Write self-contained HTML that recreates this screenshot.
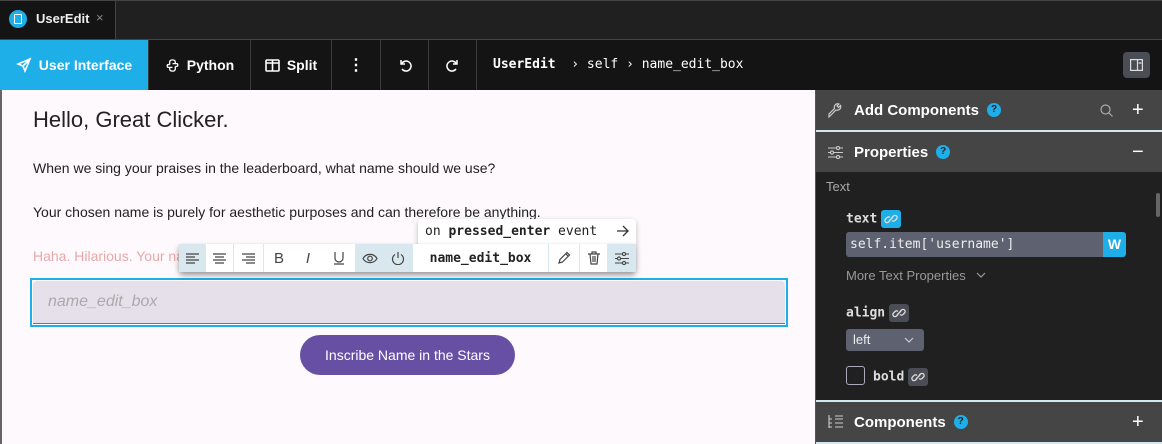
<!DOCTYPE html>
<html><head><style>
*{box-sizing:border-box;margin:0;padding:0}
body{width:1162px;height:444px;overflow:hidden;background:#1f1f1f;font-family:"Liberation Sans",sans-serif;position:relative}
.abs{position:absolute}
.mono{font-family:"DejaVu Sans Mono","Liberation Mono",monospace}
.tb{position:absolute;top:40px;height:50px;border-right:1px solid #3a3a3a;display:flex;align-items:center;justify-content:center;color:#fff;font-weight:bold;font-size:14px;gap:7px}
.hdr{position:absolute;left:816px;width:346px;background:#454545;color:#fff;font-weight:bold;font-size:15px;display:flex;align-items:center}
.q{display:inline-block;width:14px;height:14px;border-radius:50%;background:#1eaee8;color:#222;font-size:10px;text-align:center;line-height:14px;margin-left:8px}
.tg{position:absolute;top:244px;height:28px;display:flex;align-items:center;justify-content:center;border-right:1px solid #d8e8ee}
.lk{display:inline-flex;align-items:center;justify-content:center;width:20px;height:18px;border-radius:3px;background:#4a4d55;vertical-align:middle;margin-left:4px}
</style></head><body>
<svg width="0" height="0" style="position:absolute"><defs>
<symbol id="link" viewBox="0 0 14 14"><g fill="none" stroke="#ddd" stroke-width="1.3"><path d="M6 8.5L4.5 10a2 2 0 0 1-3-3L3 5.5a2 2 0 0 1 3 0"/><path d="M8 5.5L9.5 4a2 2 0 0 1 3 3L11 8.5a2 2 0 0 1-3 0"/><path d="M5 9l4-4"/></g></symbol>
</defs></svg>
<!-- tab bar -->
<div class="abs" style="left:0;top:0;width:1162px;height:40px;background:#202020;border-top:1px solid #444;border-bottom:1px solid #444"></div>
<div class="abs" style="left:0;top:1px;width:116px;height:38px;background:#141414;border-right:1px solid #444"></div>
<div class="abs" style="left:9px;top:10px;width:18px;height:18px;border-radius:50%;background:#1eaee8"></div>
<div class="abs" style="left:14px;top:14px;width:8px;height:10px;border:1.5px solid #fff;border-radius:1px"></div>
<div class="abs" style="left:36px;top:11px;color:#eee;font-weight:bold;font-size:13px">UserEdit</div>
<div class="abs" style="left:96px;top:10px;color:#888;font-size:13px">×</div>
<!-- toolbar -->
<div class="abs" style="left:0;top:40px;width:1162px;height:50px;background:#141414"></div>
<div class="tb" style="left:0;width:149px;background:#1eaee8">
<svg width="16" height="16" viewBox="0 0 16 16" fill="none" stroke="#fff" stroke-width="1.6"><path d="M14 2L2 7l5 2 2 5z M7 9l7-7"/></svg>User Interface</div>
<div class="tb" style="left:149px;width:102px"><svg width="15" height="15" viewBox="0 0 16 16" fill="none" stroke="#fff" stroke-width="1.4"><path d="M5 7V4.5C5 3 6 2 8 2s3 1 3 2.5V6M11 9v2.5C11 13 10 14 8 14s-3-1-3-2.5V10"/><path d="M5 7H3.5C2 7 2 10 3.5 10H8M11 9h1.5C14 9 14 6 12.5 6H8"/></svg>Python</div>
<div class="tb" style="left:251px;width:81px"><svg width="15" height="13" viewBox="0 0 15 13" fill="none" stroke="#fff" stroke-width="1.6"><rect x="1" y="1" width="13" height="11" rx="1"/><path d="M7.5 1v11M1 4h13"/></svg>Split</div>
<div class="tb" style="left:332px;width:49px;font-size:16px">⋮</div>
<div class="tb" style="left:381px;width:48px"><svg width="14" height="14" viewBox="0 0 14 14" fill="none" stroke="#fff" stroke-width="1.5"><path d="M3 2v4h4M3.5 6A5 5 0 1 1 4 11"/></svg></div>
<div class="tb" style="left:429px;width:48px"><svg width="14" height="14" viewBox="0 0 14 14" fill="none" stroke="#fff" stroke-width="1.5"><path d="M11 2v4H7M10.5 6A5 5 0 1 0 10 11"/></svg></div>
<div class="abs mono" style="left:493px;top:57px;color:#fff;font-size:13px;white-space:pre"><b>UserEdit</b>  › self › name_edit_box</div>
<div class="abs" style="left:1123px;top:52px;width:27px;height:26px;border-radius:4px;background:#4a4d55"></div>
<svg class="abs" style="left:1130px;top:59px" width="13" height="12" viewBox="0 0 13 12" fill="none" stroke="#ddd" stroke-width="1.2"><rect x="0.6" y="0.6" width="11.8" height="10.8"/><path d="M7.5 0.6v10.8M8.5 4h3"/></svg>
<!-- canvas -->
<div class="abs" style="left:0;top:90px;width:816px;height:354px;background:#fdf9fd;border-left:2px solid #666"></div>
<div class="abs" style="left:33px;top:107px;font-size:22px;color:#222">Hello, Great Clicker.</div>
<div class="abs" style="left:33px;top:160px;font-size:14px;color:#222">When we sing your praises in the leaderboard, what name should we use?</div>
<div class="abs" style="left:33px;top:204px;font-size:14px;color:#222">Your chosen name is purely for aesthetic purposes and can therefore be anything.</div>
<div class="abs" style="left:33px;top:248px;font-size:14px;color:#e8a8a8">Haha. Hilarious. Your name</div>
<div class="abs" style="left:30px;top:278px;width:758px;height:49px;border:2px solid #1eaee8"></div>
<div class="abs" style="left:33px;top:281px;width:752px;height:43px;background:#e6e0ea;border-radius:4px 4px 0 0;border-bottom:1.5px solid #777"></div>
<div class="abs" style="left:48px;top:293px;font-size:16px;color:#aaa;font-style:italic">name_edit_box</div>
<div class="abs" style="left:300px;top:335px;width:215px;height:40px;border-radius:20px;background:#6750a4;color:#fff;font-size:14px;text-align:center;line-height:40px">Inscribe Name in the Stars</div>
<!-- floating toolbar -->
<div class="abs" style="left:418px;top:219px;width:218px;height:26px;background:#fff;border-radius:4px 4px 0 0;box-shadow:0 2px 6px rgba(0,0,0,.25)"></div>
<div class="abs mono" style="left:425px;top:224px;font-size:13px;color:#222">on <b>pressed_enter</b> event</div>
<svg class="abs" style="left:616px;top:225px" width="13" height="12" viewBox="0 0 13 12" fill="none" stroke="#333" stroke-width="1.3"><path d="M1 6h11M7 1l5 5-5 5"/></svg>
<div class="abs" style="left:179px;top:244px;width:457px;height:28px;background:#fff;box-shadow:0 3px 6px rgba(0,0,0,.4);border-radius:0 0 4px 4px"></div>
<div class="tg" style="left:179px;width:27px;background:#d8e8ee"><svg width="13" height="11" stroke="#444" stroke-width="1.2"><path d="M0 1h13M0 4h9M0 7h13M0 10h9"/></svg></div>
<div class="tg" style="left:206px;width:28px"><svg width="13" height="11" stroke="#444" stroke-width="1.2"><path d="M0 1h13M2 4h9M0 7h13M2 10h9"/></svg></div>
<div class="tg" style="left:234px;width:30px"><svg width="13" height="11" stroke="#444" stroke-width="1.2"><path d="M0 1h13M4 4h9M0 7h13M4 10h9"/></svg></div>
<div class="tg" style="left:264px;width:30px;border:none;color:#444;font-size:15px">B</div>
<div class="tg" style="left:294px;width:28px;border:none;color:#444;font-size:15px;font-style:italic">I</div>
<div class="tg" style="left:322px;width:34px"><svg width="12" height="14" fill="none" stroke="#444" stroke-width="1.2"><path d="M2 1v6a4 4 0 0 0 8 0V1M1 13h10"/></svg></div>
<div class="tg" style="left:356px;width:28px;background:#d8e8ee;border:none"><svg width="16" height="11" fill="none" stroke="#444" stroke-width="1.2"><path d="M1 5.5C4 0 12 0 15 5.5 12 11 4 11 1 5.5z"/><circle cx="8" cy="5.5" r="2.3"/></svg></div>
<div class="tg" style="left:384px;width:29px;background:#d8e8ee"><svg width="14" height="14" fill="none" stroke="#444" stroke-width="1.2"><path d="M4 3.5A5.5 5.5 0 1 0 10 3.5M7 1v6"/></svg></div>
<div class="tg mono" style="left:413px;width:136px;color:#222;font-size:13px;font-weight:bold">name_edit_box</div>
<div class="tg" style="left:549px;width:31px"><svg width="14" height="14" fill="none" stroke="#444" stroke-width="1.2"><path d="M2 12l1-3.5L10 1.5l2.5 2.5L5.5 11z M9 3l2.5 2.5"/></svg></div>
<div class="tg" style="left:580px;width:28px"><svg width="12" height="14" fill="none" stroke="#444" stroke-width="1.2"><path d="M0 3h12M4 3V1h4v2M2 3l1 10h6l1-10M5 5v6M7 5v6"/></svg></div>
<div class="tg" style="left:608px;width:28px;background:#d8e8ee;border:none"><svg width="14" height="13" fill="none" stroke="#444" stroke-width="1.1"><path d="M0 2h14M0 6.5h14M0 11h14"/><circle cx="9" cy="2" r="1.6" fill="#d8e8ee"/><circle cx="4" cy="6.5" r="1.6" fill="#d8e8ee"/><circle cx="9" cy="11" r="1.6" fill="#d8e8ee"/></svg></div>
<!-- right panel -->
<div class="abs" style="left:815px;top:90px;width:1px;height:354px;background:#555"></div>
<div class="hdr" style="top:90px;height:40px"><svg style="margin-left:12px" width="15" height="15" fill="none" stroke="#ccc" stroke-width="1.2"><path d="M1 14l7-7a3.5 3.5 0 0 0 4.5-4.5L10.5 4.5 9 3l2-2A3.5 3.5 0 0 0 6.5 5.5L1 11z"/></svg><span style="margin-left:11px">Add Components</span><span class="q">?</span><svg style="position:absolute;left:284px" width="13" height="13" fill="none" stroke="#aaa" stroke-width="1.2"><circle cx="5.5" cy="5.5" r="4.5"/><path d="M9 9l3.5 3.5"/></svg><span style="position:absolute;left:316px;font-size:20px;font-weight:normal">+</span></div>
<div class="abs" style="left:816px;top:130px;width:346px;height:2px;background:#d0e8ee"></div>
<div class="hdr" style="top:132px;height:40px"><svg style="margin-left:12px" width="15" height="13" fill="none" stroke="#ccc" stroke-width="1.1"><path d="M0 2h15M0 6.5h15M0 11h15"/><circle cx="10" cy="2" r="1.6" fill="#454545"/><circle cx="4" cy="6.5" r="1.6" fill="#454545"/><circle cx="10" cy="11" r="1.6" fill="#454545"/></svg><span style="margin-left:11px">Properties</span><span class="q">?</span><span style="position:absolute;left:316px;font-size:20px;font-weight:normal">−</span></div>
<div class="abs" style="left:816px;top:172px;width:346px;height:228px;background:#202020"></div>
<div class="abs" style="left:1156px;top:193px;width:4px;height:24px;background:#666;border-radius:2px"></div>
<div class="abs" style="left:826px;top:179px;color:#aaa;font-size:13px">Text</div>
<div class="abs mono" style="left:846px;top:210px;color:#ddd;font-size:13px;font-weight:bold">text<span class="lk" style="background:#1eaee8"><svg width="14" height="14"><use href="#link"/></svg></span></div>
<div class="abs" style="left:846px;top:232px;width:258px;height:25px;background:#5e6270;border-radius:3px 0 0 3px"></div>
<div class="abs mono" style="left:850px;top:237px;color:#eee;font-size:13px">self.item['username']</div>
<div class="abs" style="left:1103px;top:232px;width:23px;height:25px;background:#1eaee8;border-radius:0 3px 3px 0;color:#fff;font-weight:bold;font-size:14px;text-align:center;line-height:25px">W</div>
<div class="abs" style="left:846px;top:268px;color:#999;font-size:13px">More Text Properties</div>
<svg class="abs" style="left:976px;top:272px" width="10" height="7" fill="none" stroke="#999" stroke-width="1.2"><path d="M1 1l4 4 4-4"/></svg>
<div class="abs mono" style="left:846px;top:304px;color:#ddd;font-size:13px;font-weight:bold">align<span class="lk"><svg width="14" height="14"><use href="#link"/></svg></span></div>
<div class="abs" style="left:846px;top:329px;width:78px;height:22px;background:#5e6270;border-radius:3px;color:#eee;font-size:13px;padding:3px 7px">left<svg style="position:absolute;left:58px;top:8px" width="10" height="7" fill="none" stroke="#ccc" stroke-width="1.2"><path d="M1 1l4 4 4-4"/></svg></div>
<div class="abs" style="left:846px;top:366px;width:19px;height:19px;border:1.5px solid #aab;border-radius:3px"></div>
<div class="abs mono" style="left:873px;top:368px;color:#ddd;font-size:13px;font-weight:bold">bold<span class="lk"><svg width="14" height="14"><use href="#link"/></svg></span></div>
<div class="abs" style="left:816px;top:400px;width:346px;height:2px;background:#d0e8ee"></div>
<div class="hdr" style="top:402px;height:40px"><svg style="margin-left:12px" width="15" height="14" fill="none" stroke="#ccc" stroke-width="1.1"><path d="M1 0v13M1 4h3M1 8h3M1 12h3M7 1h8M7 4h8M7 8h8M7 12h8"/></svg><span style="margin-left:11px">Components</span><span class="q">?</span><span style="position:absolute;left:316px;font-size:20px;font-weight:normal">+</span></div>
<div class="abs" style="left:816px;top:442px;width:346px;height:2px;background:#d0e8ee"></div>
</body></html>
